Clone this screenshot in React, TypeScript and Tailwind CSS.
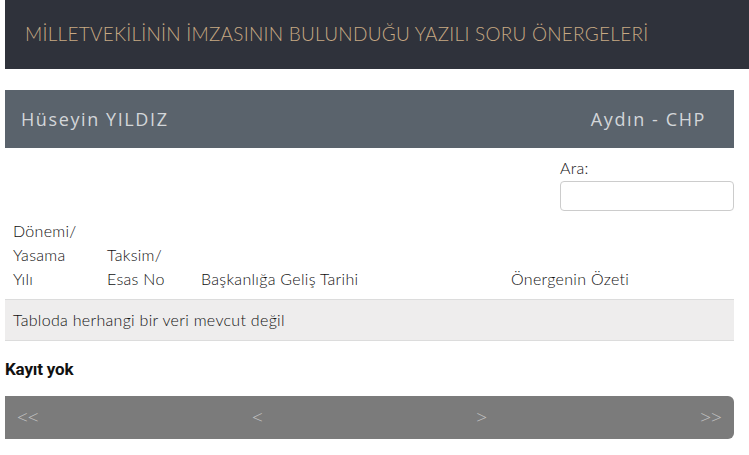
import React from 'react';

const raleway = { fontFamily: 'Lato, "Open Sans", sans-serif' };

export default function App() {
  return (
    <div className="bg-white w-[749px] h-[455px] overflow-hidden font-['Lato',sans-serif]">
      <div className="ml-[5px] h-[69px] bg-[#2f323b] flex items-center pl-5">
        <h1 className="text-[19px] font-light text-[#c7a983] tracking-[0.25px] uppercase">
          MİLLETVEKİLİNİN İMZASININ BULUNDUĞU YAZILI SORU ÖNERGELERİ
        </h1>
      </div>

      <div className="ml-[5px] mr-[15px]">
        <div className="mt-[21px] h-[58px] bg-[#5a636c] flex items-center justify-between px-4 font-['Open_Sans',sans-serif] text-[18px] font-medium tracking-[1.6px] text-[#d3d6d9]">
          <span>Hüseyin YILDIZ</span>
          <span className="pr-3">Aydın - CHP</span>
        </div>

        <div className="flex justify-end mt-[10px]">
          <label className="flex flex-col w-[174px] text-[16px] font-light tracking-[0.3px] text-[#111]">
            <span className="leading-[20px]">Ara:</span>
            <input className="mt-[3px] h-[30px] w-full rounded border border-[#cccccc] outline-none" />
          </label>
        </div>

        <table className="w-full text-[16px] font-light tracking-[0.3px] text-[#111] border-collapse" style={raleway}>
          <thead>
            <tr className="align-bottom text-left leading-[24px]">
              <th className="font-light px-2 py-2 w-[94px]">
                Dönemi/<br />Yasama<br />Yılı
              </th>
              <th className="font-light px-2 py-2 w-[94px]">
                Taksim/<br />Esas No
              </th>
              <th className="font-light px-2 py-2 w-[310px]">Başkanlığa Geliş Tarihi</th>
              <th className="font-light px-2 py-2">Önergenin Özeti</th>
            </tr>
          </thead>
          <tbody>
            <tr className="bg-[#eeeded] border-y border-[#dcdcdc]">
              <td colSpan={4} className="px-2 h-[41px]">
                Tabloda herhangi bir veri mevcut değil
              </td>
            </tr>
          </tbody>
        </table>

        <p className="mt-[17px] text-[17px] font-bold text-[#111] font-['Roboto',sans-serif] leading-[22px] tracking-[-0.2px]">
          Kayıt yok
        </p>

        <div className="mt-[16px] h-[43px] bg-[#7b7b7b] rounded-r-md flex items-center justify-between pl-3 pr-3 text-[19px] text-[#c2c2c2] font-['Open_Sans',sans-serif] font-light">
          <span>&lt;&lt;</span>
          <span>&lt;</span>
          <span>&gt;</span>
          <span>&gt;&gt;</span>
        </div>
      </div>
    </div>
  );
}
